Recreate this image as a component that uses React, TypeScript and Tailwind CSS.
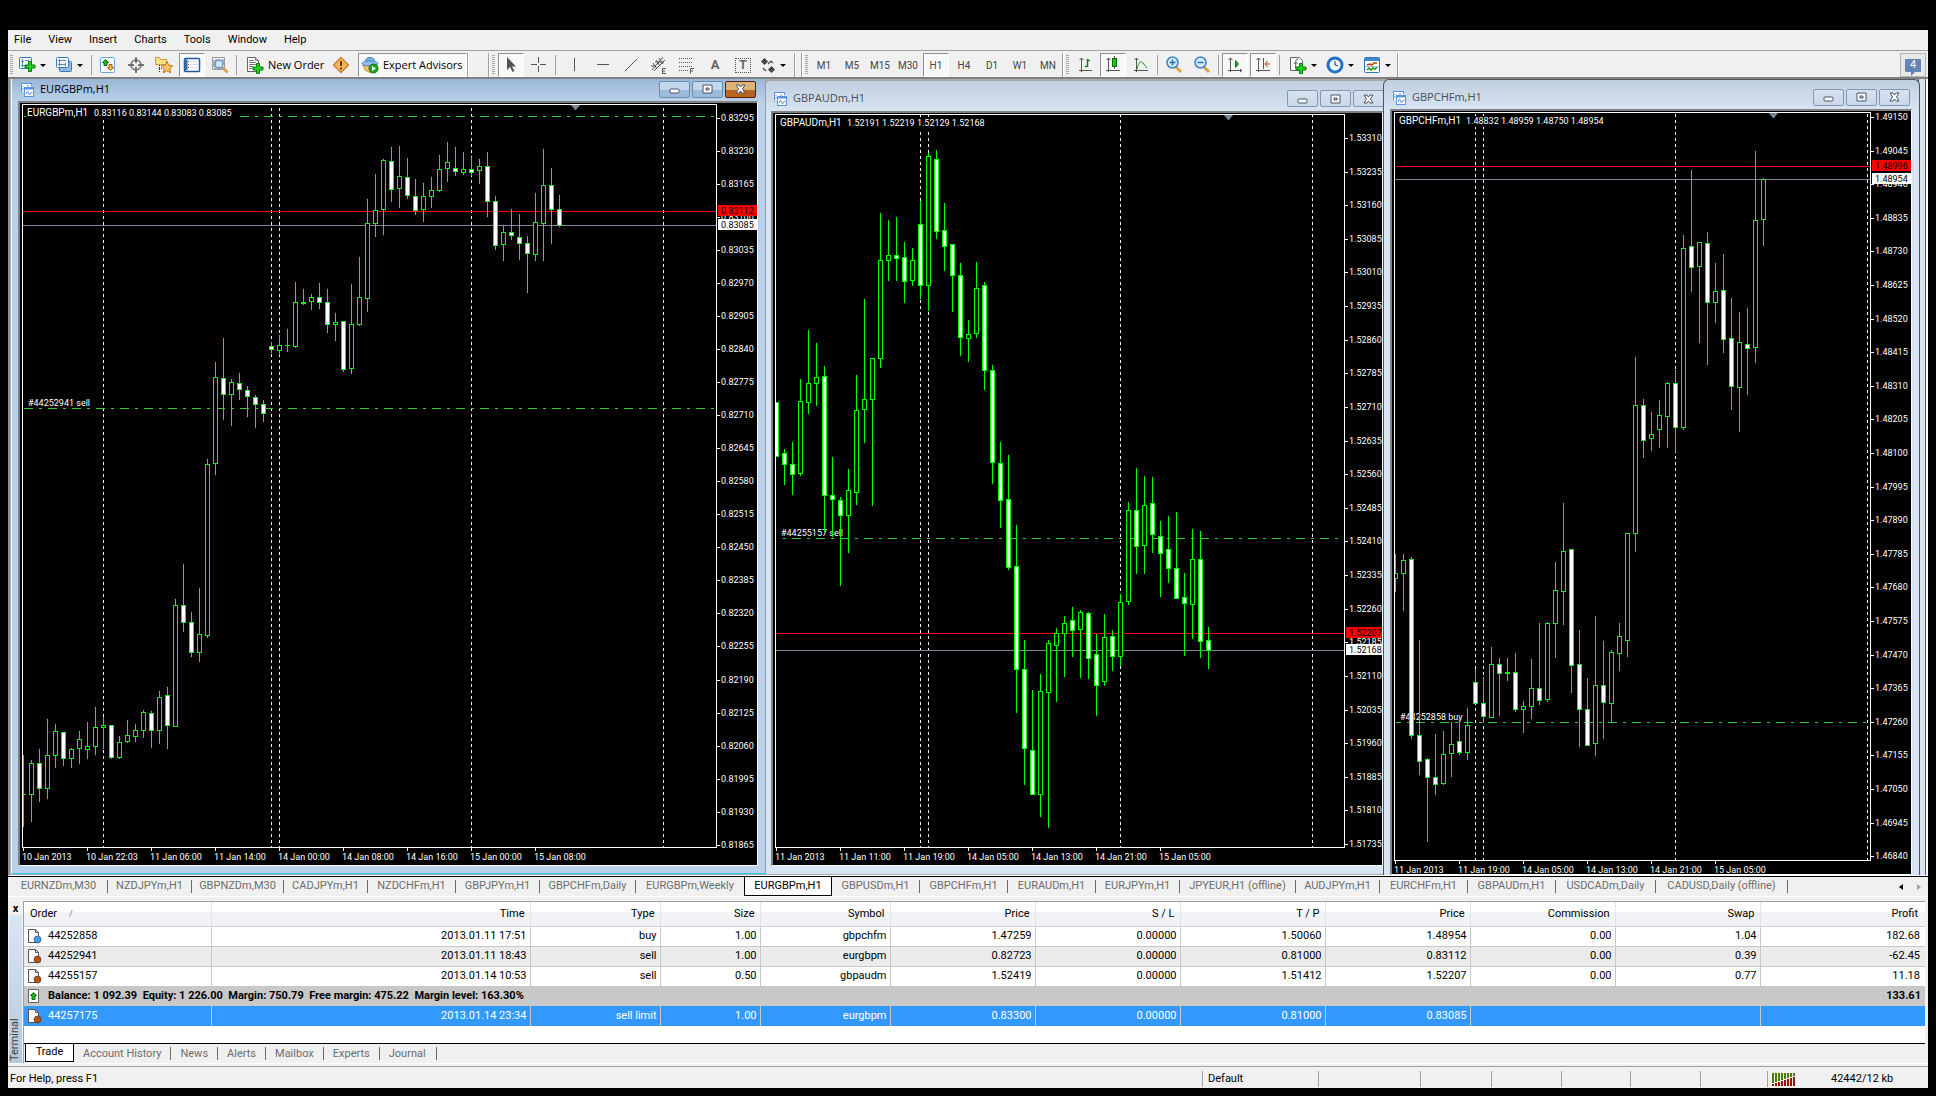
import React from 'react';
import clsx from 'clsx';

// high, body top, body bottom, low, filled (1 = bear candle)
type Candle = [number, number, number, number, number];

type ChartData = {
  id: string;
  symbol: string;
  quotes: string;
  order: string;
  orderY: number;
  limitY?: number;
  view: { x: number; y: number; w: number; h: number };
  plot: { left: number; top: number; right: number; bottom: number };
  firstX: number;
  days: number[];
  marker: number;
  ask: { y: number; label: string };
  bid: { y: number; label: string };
  axis: { y: number; step: number; from: number; by: number; count: number };
  times: string[];
  candles: Candle[];
};

const eurgbp: ChartData = {
  id: 'eurgbp',
  symbol: 'EURGBPm,H1',
  quotes: '0.83116 0.83144 0.83083 0.83085',
  order: '#44252941 sell',
  orderY: 408,
  limitY: 116,
  view: { x: 20, y: 103, w: 737, h: 762 },
  plot: { left: 22, top: 104, right: 716, bottom: 847 },
  firstX: 23,
  days: [103, 271, 279, 471, 663],
  marker: 575,
  ask: { y: 211, label: '0.83112' },
  bid: { y: 225, label: '0.83085' },
  axis: { y: 118, step: 33.03, from: 83295, by: 65, count: 23 },
  times: ['10 Jan 2013', '10 Jan 22:03', '11 Jan 06:00', '11 Jan 14:00', '14 Jan 00:00', '14 Jan 08:00', '14 Jan 16:00', '15 Jan 00:00', '15 Jan 08:00'],
  candles: [
    [755, 794, 795, 827, 0], [760, 763, 795, 822, 0], [749, 763, 789, 802, 1], [719, 755, 789, 799, 0],
    [724, 731, 756, 768, 0], [732, 732, 759, 766, 1], [748, 749, 759, 768, 0], [731, 739, 749, 764, 0],
    [722, 746, 750, 759, 0], [707, 727, 747, 755, 0], [717, 725, 728, 749, 0], [725, 725, 758, 759, 1],
    [736, 742, 758, 759, 0], [720, 735, 742, 743, 0], [724, 730, 737, 742, 0], [710, 712, 731, 738, 0],
    [711, 713, 731, 748, 1], [691, 697, 731, 744, 0], [687, 695, 726, 749, 1], [599, 605, 727, 727, 0],
    [564, 605, 623, 632, 1], [612, 622, 653, 657, 1], [588, 634, 653, 662, 0], [459, 464, 636, 638, 0],
    [362, 377, 464, 475, 0], [338, 378, 395, 420, 1], [379, 382, 395, 426, 0], [373, 383, 390, 400, 1],
    [386, 390, 397, 417, 1], [395, 397, 405, 428, 1], [400, 404, 414, 422, 1], [342, 346, 350, 353, 1],
    [335, 345, 351, 355, 0], [329, 345, 346, 352, 0], [282, 302, 347, 348, 0], [289, 302, 304, 305, 1],
    [294, 297, 302, 310, 0], [283, 297, 303, 309, 1], [289, 302, 325, 333, 1], [313, 322, 325, 341, 0],
    [321, 321, 370, 372, 1], [284, 324, 369, 374, 0], [257, 297, 325, 326, 0], [199, 223, 299, 312, 0],
    [174, 210, 224, 237, 0], [159, 160, 210, 235, 0], [147, 161, 190, 202, 1], [146, 176, 189, 208, 0],
    [158, 177, 196, 199, 1], [179, 196, 211, 215, 1], [183, 196, 210, 222, 0], [177, 190, 197, 208, 0],
    [155, 169, 191, 192, 0], [142, 162, 169, 182, 0], [147, 168, 172, 176, 1], [152, 169, 173, 175, 0],
    [157, 169, 173, 176, 1], [159, 166, 171, 184, 0], [152, 166, 202, 217, 1], [196, 201, 246, 250, 1],
    [225, 232, 245, 261, 0], [209, 232, 236, 240, 1], [214, 237, 244, 260, 1], [236, 243, 254, 293, 1],
    [193, 222, 255, 261, 0], [149, 185, 224, 261, 0], [168, 185, 210, 244, 1], [195, 209, 226, 227, 1],
  ],
};

const gbpaud: ChartData = {
  id: 'gbpaud',
  symbol: 'GBPAUDm,H1',
  quotes: '1.52191 1.52219 1.52129 1.52168',
  order: '#44255157 sell',
  orderY: 538,
  view: { x: 773, y: 113, w: 609, h: 752 },
  plot: { left: 775, top: 114, right: 1344, bottom: 847 },
  firstX: 776,
  days: [920, 928, 1120, 1312],
  marker: 1228,
  ask: { y: 633, label: '1.52207' },
  bid: { y: 650, label: '1.52168' },
  axis: { y: 138, step: 33.62, from: 153310, by: 75, count: 22 },
  times: ['11 Jan 2013', '11 Jan 11:00', '11 Jan 19:00', '14 Jan 05:00', '14 Jan 13:00', '14 Jan 21:00', '15 Jan 05:00'],
  candles: [
    [402, 402, 457, 457, 1], [449, 453, 465, 485, 1], [442, 464, 475, 495, 1], [379, 401, 474, 476, 0],
    [330, 383, 403, 414, 0], [343, 377, 384, 406, 0], [366, 376, 496, 532, 1], [457, 495, 500, 537, 1],
    [497, 500, 516, 586, 1], [469, 490, 516, 553, 0], [375, 410, 493, 505, 0], [299, 399, 410, 443, 0],
    [358, 358, 400, 506, 0], [213, 260, 359, 368, 0], [220, 255, 261, 281, 0], [217, 255, 259, 281, 1],
    [242, 257, 282, 303, 1], [248, 260, 281, 286, 0], [201, 224, 286, 299, 1], [153, 156, 286, 311, 0],
    [150, 159, 232, 239, 1], [203, 230, 247, 271, 1], [244, 244, 276, 312, 1], [263, 275, 338, 356, 1],
    [320, 334, 339, 362, 0], [262, 288, 334, 338, 0], [282, 285, 371, 390, 1], [365, 370, 463, 484, 1],
    [442, 463, 501, 528, 1], [455, 499, 568, 570, 1], [525, 566, 670, 713, 1], [640, 669, 749, 785, 1],
    [690, 750, 795, 795, 1], [674, 691, 795, 817, 0], [640, 643, 693, 828, 0], [628, 633, 646, 702, 0],
    [616, 623, 634, 677, 0], [607, 620, 631, 657, 1], [610, 612, 630, 678, 0], [612, 613, 659, 679, 1],
    [634, 654, 686, 716, 1], [614, 637, 682, 686, 0], [630, 636, 657, 671, 1], [594, 602, 657, 666, 0],
    [502, 510, 602, 605, 0], [468, 510, 547, 574, 1], [476, 505, 546, 574, 0], [477, 503, 535, 553, 1],
    [521, 536, 554, 597, 1], [516, 549, 569, 583, 1], [512, 568, 599, 599, 1], [573, 597, 604, 656, 1],
    [529, 559, 605, 639, 0], [531, 559, 642, 658, 1], [627, 640, 651, 669, 1],
  ],
};

const gbpchf: ChartData = {
  id: 'gbpchf',
  symbol: 'GBPCHFm,H1',
  quotes: '1.48832 1.48959 1.48750 1.48954',
  order: '#44252858 buy',
  orderY: 722,
  view: { x: 1392, y: 111, w: 519, h: 763 },
  plot: { left: 1394, top: 112, right: 1870, bottom: 860 },
  firstX: 1395,
  days: [1475, 1483, 1675, 1867],
  marker: 1773,
  ask: { y: 166, label: '1.48996' },
  bid: { y: 179, label: '1.48954' },
  axis: { y: 117, step: 33.6, from: 149150, by: 105, count: 23 },
  times: ['11 Jan 2013', '11 Jan 19:00', '14 Jan 05:00', '14 Jan 13:00', '14 Jan 21:00', '15 Jan 05:00'],
  candles: [
    [554, 573, 579, 592, 0], [554, 560, 574, 611, 0], [557, 559, 736, 739, 1], [640, 735, 762, 775, 1],
    [758, 759, 778, 842, 1], [734, 777, 785, 795, 1], [731, 754, 784, 785, 0], [722, 744, 754, 777, 0],
    [716, 741, 753, 755, 1], [708, 725, 753, 760, 0], [669, 682, 704, 704, 1], [677, 703, 717, 723, 1],
    [647, 664, 718, 718, 0], [658, 664, 674, 716, 1], [658, 672, 674, 681, 1], [653, 672, 710, 712, 1],
    [701, 706, 710, 733, 0], [659, 688, 707, 719, 0], [623, 688, 701, 705, 1], [622, 623, 700, 702, 0],
    [562, 590, 624, 658, 0], [503, 551, 592, 625, 0], [549, 549, 666, 693, 1], [630, 664, 710, 747, 1],
    [678, 709, 746, 746, 1], [616, 685, 744, 756, 0], [641, 685, 703, 739, 1], [650, 652, 704, 722, 0],
    [623, 636, 654, 671, 0], [533, 533, 641, 657, 0], [357, 405, 534, 552, 0], [399, 405, 441, 458, 1],
    [412, 434, 439, 451, 0], [400, 415, 430, 448, 0], [382, 383, 417, 448, 0], [370, 383, 428, 452, 1],
    [235, 248, 428, 430, 0], [170, 246, 268, 292, 1], [242, 242, 267, 343, 0], [232, 243, 303, 365, 1],
    [263, 291, 303, 323, 0], [254, 290, 340, 353, 1], [298, 338, 387, 410, 1], [312, 342, 388, 432, 0],
    [308, 344, 349, 395, 1], [151, 220, 348, 363, 0], [178, 179, 220, 246, 0],
  ],
};

const Chart = ({ data }: { data: ChartData }) => {
  const { view, plot, axis, ask, bid } = data;
  const plotW = plot.right - plot.left;
  const tagW = view.x + view.w - plot.right - 2;
  const orderLines = data.limitY ? [data.limitY, data.orderY] : [data.orderY];

  return (
    <svg
      width={view.w}
      height={view.h}
      viewBox={`${view.x} ${view.y} ${view.w} ${view.h}`}
      className="block shrink-0 bg-black font-['Roboto','Liberation_Sans',sans-serif] text-[9px]"
      role="img"
      aria-label={data.symbol}
    >
      <defs>
        <clipPath id={data.id}>
          <rect x={plot.left + 1} y={plot.top} width={plotW} height={plot.bottom - plot.top} />
        </clipPath>
        <pattern id={`${data.id}-v`} width="1" height="6" patternUnits="userSpaceOnUse">
          <rect width="1" height="3" fill="#fff" />
        </pattern>
        <pattern id={`${data.id}-h`} width="24" height="1" patternUnits="userSpaceOnUse">
          <rect width="9" height="1" fill="#32cd32" />
          <rect x="15" width="3" height="1" fill="#32cd32" />
        </pattern>
      </defs>

      <g shapeRendering="crispEdges">
        {data.days.map((x) => (
          <rect key={x} x={x} y={plot.top} width="1" height={plot.bottom - plot.top} fill={`url(#${data.id}-v)`} />
        ))}
        {orderLines.map((y) => (
          <rect key={y} x={plot.left + 2} y={y} width={plotW - 4} height="1" fill={`url(#${data.id}-h)`} />
        ))}
        <rect x={plot.left} y={ask.y} width={plotW} height="1" fill="#f00" />
        <rect x={plot.left} y={bid.y} width={plotW} height="1" fill="#778899" />
      </g>

      <text x={plot.left + 6} y={data.orderY - 2} fill="#fff">{data.order}</text>

      <g shapeRendering="crispEdges" clipPath={`url(#${data.id})`}>
        {data.candles.map(([high, top, bottom, low, filled], i) => {
          const x = data.firstX + i * 8;
          return (
            <g key={x}>
              <rect x={x} y={high} width="1" height={low - high} fill="#0f0" />
              <rect x={x - 2} y={top} width="5" height={bottom - top} fill="#0f0" />
              {bottom - top > 2 && (
                <rect x={x - 1} y={top + 1} width="3" height={bottom - top - 2} fill={filled ? '#fff' : '#000'} />
              )}
            </g>
          );
        })}
      </g>

      <rect x={plot.left + 4} y={plot.top + 4} width="213" height="11" fill="#000" />
      <text x={plot.left + 5} y={plot.top + 12} fill="#fff" className="text-[10px]">{data.symbol}</text>
      <text x={plot.left + 72} y={plot.top + 12} fill="#fff">{data.quotes}</text>

      <g shapeRendering="crispEdges" fill="#fff">
        <rect x={plot.left} y={plot.top} width={plotW + 1} height="1" />
        <rect x={plot.left} y={plot.bottom} width={plotW + 1} height="1" />
        <rect x={plot.left} y={plot.top} width="1" height={plot.bottom - plot.top} />
        <rect x={plot.right} y={plot.top} width="1" height={plot.bottom - plot.top} />
      </g>
      <path d={`M${data.marker - 4} ${plot.top + 1}h9l-4 5h-1z`} fill="#778899" />

      {Array.from({ length: axis.count }, (_, i) => {
        const y = Math.round(axis.y + i * axis.step);
        return (
          <g key={i} fill="#fff">
            <rect x={plot.right} y={y} width="4" height="1" />
            <text x={plot.right + 5} y={y + 3}>{((axis.from - i * axis.by) / 100000).toFixed(5)}</text>
          </g>
        );
      })}
      {data.times.map((time, i) => (
        <g key={time} fill="#fff">
          <rect x={data.firstX + i * 64} y={plot.bottom} width="1" height="4" />
          <text x={data.firstX - 1 + i * 64} y={plot.bottom + 13}>{time}</text>
        </g>
      ))}

      <rect x={plot.right + 2} y={ask.y - 6} width={tagW} height="11" fill="#f00" />
      <text x={plot.right + 5} y={ask.y + 3} fill="#000">{ask.label}</text>
      <rect x={plot.right + 2} y={bid.y - 6} width={tagW} height="11" fill="#fff" />
      <text x={plot.right + 5} y={bid.y + 3} fill="#000">{bid.label}</text>
    </svg>
  );
};

const ChartIcon = () => (
  <svg width="15" height="15" viewBox="0 0 15 15" fill="none" stroke="#5b93e0" aria-hidden="true">
    <path d="M1.500 10.500V1.500H11.500V4" fill="#fff" />
    <path d="M1 1.500H12M3 8V4M5 7V4M7 4h2" strokeDasharray="2 1" />
    <rect x="4.500" y="5.500" width="9" height="9" fill="#fff" />
    <path d="M4 6.500h10" strokeWidth="2" />
    <path d="M6 12l1.500-3 2 4 2-3 1 1" />
  </svg>
);

const CaptionButton = ({ kind, active }: { kind: 'Minimize' | 'Maximize' | 'Close'; active: boolean }) => (
  <button
    aria-label={kind}
    className={clsx(
      'flex h-[17px] w-[31px] items-center justify-center rounded-[2px] border',
      active && kind === 'Close' && 'border-[#5a1a14] bg-linear-to-b from-[#dcb478] from-50% to-[#b5651d] to-50%',
      active && kind !== 'Close' && 'border-[#6f8bab] bg-linear-to-b from-[#c2d7ee] from-50% to-[#9dbbdc] to-50%',
      !active && 'border-[#8797b3] bg-linear-to-b from-[#d6e2f0] to-[#cbd8e8]',
    )}
  >
    <svg width="11" height="10" viewBox="0 0 11 10" fill="#fff" stroke="#4a5468" aria-hidden="true">
      {kind === 'Minimize' && <rect x="1" y="5" width="9" height="4" rx="1" />}
      {kind === 'Maximize' && <path fillRule="evenodd" d="M1 1h9v8H1zM4 4v2h3V4z" />}
      {kind === 'Close' && <path d="M1 1h3l1.500 2L7 1h3L7.500 5 10 9H7L5.500 7 4 9H1l2.500-4z" />}
    </svg>
  </button>
);

type WindowProps = { data: ChartData; active?: boolean; className: string; titleClass: string };

const ChartWindow = ({ data, active = false, className, titleClass }: WindowProps) => (
  <section className={clsx('absolute overflow-hidden', className)}>
    <header className={clsx('flex items-center gap-[5px] pl-2', titleClass)}>
      <ChartIcon />
      <h2 className={clsx("flex-1 font-['Open_Sans'] text-[11px]", active ? 'text-black' : 'text-[#4a5058]')}>{data.symbol}</h2>
      <div className="flex gap-[2px]">
        <CaptionButton kind="Minimize" active={active} />
        <CaptionButton kind="Maximize" active={active} />
        <CaptionButton kind="Close" active={active} />
      </div>
    </header>
    <div className="ml-[6px] w-max border-t-2 border-r border-b border-l-2 border-t-[#808080] border-r-white border-b-white border-l-[#808080]">
      <Chart data={data} />
    </div>
  </section>
);

/* ---------- toolbar ---------- */

const Svg = ({ children, w = 18 }: { children: React.ReactNode; w?: number }) => (
  <svg width={w} height="18" viewBox={`0 0 ${w} 18`} fill="none" stroke="#555" className="shrink-0" aria-hidden="true">
    {children}
  </svg>
);

const icons = {
  newChart: (
    <Svg>
      <rect x="1.500" y="1.500" width="12" height="11" rx="1" fill="#f4f9ff" stroke="#3d78b8" />
      <path d="M4.500 3v8M3 9.500h9M3 5.500h3M7 4.500h4" stroke="#5b87b4" />
      <path d="M10.500 5.500h3v3.500H17v3h-3.500v3.500h-3V12H7V9h3.500z" fill="#1fd01f" stroke="#0a7a0a" />
    </Svg>
  ),
  profiles: (
    <Svg>
      <rect x="4.500" y="5.500" width="12" height="10" rx="1" fill="#8fb8e4" stroke="#3d78b8" />
      <rect x="1.500" y="1.500" width="12" height="10" rx="1" fill="#f4f9ff" stroke="#3d78b8" />
      <path d="M4.500 3v7M3 4.500h8M3 8.500h8M10.500 7v3" stroke="#5b87b4" />
    </Svg>
  ),
  market: (
    <Svg>
      <rect x="1.500" y="1.500" width="14" height="15" rx="1" fill="#fdfeff" stroke="#6ea3d6" />
      <path d="M6.500 3.500l3 3H8v3H5v-3H3.500z" fill="#22b822" stroke="#0c700c" />
      <path d="M11.500 14.500l-3-3H10v-3h3v3h1.500z" fill="#ffb640" stroke="#a65c08" />
    </Svg>
  ),
  data: (
    <Svg>
      <circle cx="9" cy="9" r="5" strokeWidth="1.500" stroke="#777" />
      <path d="M9 1v6M9 11v6M1 9h6M11 9h6" strokeWidth="1.500" />
    </Svg>
  ),
  navigator: (
    <Svg w={20}>
      <path d="M1.500 8.500v-7h4l1 2h6v5z" fill="#fbdf8a" stroke="#cf9a3a" />
      <path d="M5.500 9v7M5 12.500h4" strokeDasharray="1 1" stroke="#333" />
      <path d="M13 5.500l1.800 3.700 4 .6-2.900 2.900.7 4.100-3.600-2-3.600 2 .7-4.100-2.900-2.900 4-.6z" fill="#ffc069" stroke="#c4781c" />
    </Svg>
  ),
  terminal: (
    <Svg>
      <rect x="1.500" y="2.500" width="15" height="13" rx="1" fill="#fff" stroke="#1f5c9e" strokeWidth="1.500" />
      <path d="M3 3.500v11" stroke="#2f6fb0" strokeWidth="3" />
      <path d="M7 5.500h8M7 8.500h8M7 11.500h8" stroke="#d3ddf2" />
      <path d="M5.500 5v8" stroke="#b03030" strokeDasharray="1 2" />
    </Svg>
  ),
  tester: (
    <Svg>
      <path d="M1.500 1.500h12v12h-12z" fill="#f5f5f5" stroke="#999" />
      <path d="M3 4v7M5 3v8M12 3v5M3 12h9" stroke="#777" />
      <circle cx="8" cy="8" r="4" fill="#cfe6fa" stroke="#5c93cb" strokeWidth="1.500" />
      <path d="M11.500 11.500l5 5" stroke="#d79a4a" strokeWidth="2.500" />
    </Svg>
  ),
  order: (
    <Svg>
      <path d="M1.500 1.500h8l3 3v11h-11z" fill="#fff" stroke="#666" />
      <path d="M9.500 1.500v3h3M3 4.500h5M3 6.500h7M3 8.500h7M3 10.500h4M3 12.500h3" stroke="#777" />
      <path d="M10.500 7.500h3V11H17v3h-3.500v3.500h-3V14H7v-3h3.500z" fill="#1fd01f" stroke="#0a7a0a" />
    </Svg>
  ),
  warning: (
    <Svg>
      <path d="M9 1.500L16.500 9 9 16.500 1.500 9z" fill="#f6b45c" stroke="#c8842c" strokeLinejoin="round" strokeWidth="1.500" />
      <path d="M9 5v5M9 11.500v2" stroke="#6b3c08" strokeWidth="2" />
    </Svg>
  ),
  expert: (
    <Svg>
      <path d="M2 9h14l-2 5-4 3-6-3z" fill="#f2c46c" stroke="#c99236" />
      <path d="M4.500 7C4 3 6 1.500 9 1.500S14 3 13.500 7z" fill="#75b0e6" stroke="#4a86c4" />
      <ellipse cx="9" cy="7.500" rx="8" ry="2.500" fill="#8fc0ee" stroke="#4a86c4" />
      <circle cx="12.500" cy="12.500" r="4.500" fill="#17a81d" stroke="#0c7a10" />
      <path d="M11 10v5l4-2.500z" fill="#fff" stroke="none" />
    </Svg>
  ),
  cursor: <Svg><path d="M5 1v13l3-3 2.500 5 2-1-2.500-4.500h4z" fill="#555" stroke="none" /></Svg>,
  cross: <Svg><path d="M8.500 1v6M8.500 10v6M1 8.500h6M10 8.500h6" stroke="#555" /></Svg>,
  vline: <Svg><path d="M8.500 2v13" /></Svg>,
  hline: <Svg><path d="M3 8.500h12" /></Svg>,
  trend: <Svg><path d="M3 15L15 3" /></Svg>,
  channel: (
    <Svg>
      <path d="M2 14L13 1M4 15L15 4M3 7l4 6M6 4l4 6M9 2l4 6M1 10h5M5 6h9" />
      <path d="M16 12.500h-3.500v5H16M12.500 15H15" />
    </Svg>
  ),
  fibo: (
    <Svg>
      <path d="M1 2.500h14M1 6.500h14M1 10.500h14M1 14.500h9" strokeDasharray="1 1" />
      <path d="M16 12.500h-3.500v5M12.500 15H15" />
    </Svg>
  ),
  shapes: (
    <Svg w={16}>
      <path d="M4.500 2l3.500 3.500L4.500 9 1 5.500zM11.500 10l3.500 3.500-3.500 3.500L8 13.500z" fill="#444" stroke="none" />
      <path d="M3 12l3 3M8 8l3-3M11 5l2 2" strokeWidth="1.500" />
    </Svg>
  ),
  bars: (
    <Svg>
      <path d="M5.500 2v14M3 14.500h13M3.500 4l2-2 2 2" />
      <path d="M11.500 3v8M9 10.500h2M12 4.500h2" stroke="#1a7a1a" strokeWidth="1.500" />
    </Svg>
  ),
  candles: (
    <Svg>
      <path d="M4.500 2v14M2 14.500h14M2.500 4l2-2 2 2M10.500 0v13" />
      <rect x="8.500" y="2.500" width="4" height="8" fill="#1fc01f" stroke="#0c700c" />
    </Svg>
  ),
  line: (
    <Svg>
      <path d="M4.500 2v14M2 14.500h14M2.500 4l2-2 2 2" />
      <path d="M5 13C7 5 9 5 11 7l4 5" stroke="#1a9a1a" />
    </Svg>
  ),
  zoomIn: (
    <Svg>
      <path d="M11 11l5 5" stroke="#d9a33a" strokeWidth="3" />
      <circle cx="7.500" cy="6.500" r="5.500" fill="#d4eafc" stroke="#3f83c6" strokeWidth="1.500" />
      <path d="M4.500 6.500h6M7.500 3.500v6" stroke="#2b6cb3" strokeWidth="1.500" />
    </Svg>
  ),
  zoomOut: (
    <Svg>
      <path d="M11 11l5 5" stroke="#d9a33a" strokeWidth="3" />
      <circle cx="7.500" cy="6.500" r="5.500" fill="#d4eafc" stroke="#3f83c6" strokeWidth="1.500" />
      <path d="M4.500 6.500h6" stroke="#2b6cb3" strokeWidth="1.500" />
    </Svg>
  ),
  scroll: (
    <Svg>
      <path d="M4.500 2v14M2 14.500h14M2.500 4l2-2 2 2M14 13l2 1.500-2 1.500" />
      <path d="M9.500 4.500v7l3-3.500z" fill="#1fb01f" stroke="#0c800c" />
    </Svg>
  ),
  shift: (
    <Svg>
      <path d="M4.500 2v14M2 14.500h14M2.500 4l2-2 2 2" />
      <path d="M9.500 2v11" stroke="#2b5f9a" />
      <path d="M16 8h-5M13.500 5L11 8l2.500 3" stroke="#a8430c" />
    </Svg>
  ),
  indicators: (
    <Svg>
      <path d="M1.500 1.500h9l3 3v10h-12z" fill="#fff" stroke="#666" />
      <path d="M9 3C6 3 7 6 6.500 12M4.500 7h4" />
      <path d="M10.500 7.500h3V11H17v3h-3.500v3.500h-3V14H7v-3h3.500z" fill="#1fd01f" stroke="#0a7a0a" />
    </Svg>
  ),
  clock: (
    <Svg>
      <circle cx="9" cy="9" r="7" fill="#eef6ff" stroke="#2272c3" strokeWidth="3" />
      <path d="M9 5v4l3 1" stroke="#333" />
    </Svg>
  ),
  template: (
    <Svg>
      <rect x="1.500" y="1.500" width="15" height="15" rx="1" fill="#fff" stroke="#2f74b8" />
      <path d="M2 3.500h14" stroke="#3f86cc" strokeWidth="3" />
      <path d="M4 9l3-1 2 1 2-2 3 0" stroke="#a8430c" strokeWidth="1.500" />
      <path d="M4 14l2-2 2 2 2-2 2 1 2-2" stroke="#1a9a1a" strokeWidth="1.500" />
      <path d="M2 10.500h14" stroke="#9cc" />
    </Svg>
  ),
};

const pressedStyle = 'border border-t-[#909090] border-l-[#909090] border-r-white border-b-white bg-[#f8f8f8]';

type ToolProps = { label: string; pressed?: boolean; children: React.ReactNode };

const Tool = ({ label, pressed, children }: ToolProps) => (
  <button
    aria-label={label}
    title={label}
    aria-pressed={pressed}
    className={clsx('mx-px flex h-6 w-[26px] shrink-0 items-center justify-center text-[10px] text-[#444]', pressed && pressedStyle)}
  >
    {children}
  </button>
);

const DropTool = ({ label, children }: ToolProps) => (
  <button aria-label={label} title={label} className="flex h-6 w-[37px] shrink-0 items-center gap-1 pl-[3px]">
    {children}
    <span className="h-0 w-0 border-x-[3px] border-t-[3px] border-x-transparent border-t-black" />
  </button>
);

const Grip = () => (
  <span className="mx-[2px] h-5 w-[3px] shrink-0 bg-[repeating-linear-gradient(to_bottom,#a8a8a8_0_1px,#f0f0f0_1px_2px)]" />
);
const Edge = () => <span className="h-[24px] w-[2px] shrink-0 border-l border-[#a0a0a0] bg-white" />;
const Sep = () => <span className="mx-[2px] h-5 w-px shrink-0 bg-[#a0a0a0]" />;

const periods = ['M1', 'M5', 'M15', 'M30', 'H1', 'H4', 'D1', 'W1', 'MN'];

const Toolbar = () => (
  <div className="flex h-[26px] items-center pt-[2px]">
    <Grip />
    <div className="flex items-center">
      <DropTool label="New chart">{icons.newChart}</DropTool>
      <DropTool label="Profiles">{icons.profiles}</DropTool>
      <Sep />
      <Tool label="Market Watch">{icons.market}</Tool>
      <Tool label="Data Window">{icons.data}</Tool>
      <Tool label="Navigator">{icons.navigator}</Tool>
      <Tool label="Terminal" pressed>{icons.terminal}</Tool>
      <Tool label="Strategy Tester">{icons.tester}</Tool>
      <Sep />
      <button className="flex h-6 w-[88px] shrink-0 items-center gap-1 pl-[7px] font-['Open_Sans'] text-[11px] whitespace-nowrap">
        {icons.order}
        New Order
      </button>
      <Tool label="MetaEditor">{icons.warning}</Tool>
      <button aria-pressed="true" className={clsx("ml-[3px] flex h-6 w-[109px] shrink-0 items-center gap-1 pl-[2px] font-['Open_Sans'] text-[11px] whitespace-nowrap", pressedStyle)}>
        {icons.expert}
        Expert Advisors
      </button>
      <Edge />
    </div>
    <div className="ml-[19px] flex items-center">
      <Edge />
      <Grip />
      <Tool label="Cursor" pressed>{icons.cursor}</Tool>
      <Tool label="Crosshair">{icons.cross}</Tool>
      <Sep />
      <div className="ml-[3px] flex items-center">
        <Tool label="Vertical line">{icons.vline}</Tool>
        <Tool label="Horizontal line">{icons.hline}</Tool>
        <Tool label="Trendline">{icons.trend}</Tool>
        <Tool label="Equidistant channel">{icons.channel}</Tool>
        <Tool label="Fibonacci">{icons.fibo}</Tool>
        <Tool label="Text"><span className="text-[13px] font-bold text-[#666]">A</span></Tool>
        <Tool label="Text label">
          <span className="border border-dotted border-[#555] px-[3px] text-[12px] leading-[13px] font-bold text-[#666]">T</span>
        </Tool>
        <DropTool label="Arrows">{icons.shapes}</DropTool>
      </div>
      <Edge />
    </div>
    <div className="ml-[5px] flex items-center">
      <Edge />
      <Grip />
      {periods.map((period) => (
        <Tool key={period} label={period} pressed={period === 'H1'}>{period}</Tool>
      ))}
      <Edge />
      <Grip />
      <Tool label="Bar chart">{icons.bars}</Tool>
      <Tool label="Candlesticks" pressed>{icons.candles}</Tool>
      <Tool label="Line chart">{icons.line}</Tool>
      <Sep />
      <Tool label="Zoom in">{icons.zoomIn}</Tool>
      <Tool label="Zoom out">{icons.zoomOut}</Tool>
      <Sep />
      <Tool label="Auto scroll" pressed>{icons.scroll}</Tool>
      <Tool label="Chart shift" pressed>{icons.shift}</Tool>
      <Sep />
      <div className="ml-1 flex items-center">
        <DropTool label="Indicators">{icons.indicators}</DropTool>
        <DropTool label="Periods">{icons.clock}</DropTool>
        <DropTool label="Templates">{icons.template}</DropTool>
      </div>
      <Edge />
    </div>
    <button aria-label="4 new messages" className="mr-[2px] ml-auto flex h-6 w-[26px] items-center justify-center border border-[#b4b4b4] bg-[#e8e8e8]">
      <span className="relative flex h-[13px] w-4 items-center justify-center rounded-[1px] bg-[#6583b5] text-[11px] text-white">
        4
        <span className="absolute top-full left-[6px] h-0 w-0 border-t-4 border-r-4 border-t-[#6583b5] border-r-transparent" />
      </span>
    </button>
  </div>
);

/* ---------- bottom part ---------- */

const chartTabs = [
  { name: 'EURNZDm,M30', width: 'w-[98px]' },
  { name: 'NZDJPYm,H1', width: 'w-[84px]' },
  { name: 'GBPNZDm,M30', width: 'w-[92px]' },
  { name: 'CADJPYm,H1', width: 'w-[84px]' },
  { name: 'NZDCHFm,H1', width: 'w-[88px]' },
  { name: 'GBPJPYm,H1', width: 'w-[84px]' },
  { name: 'GBPCHFm,Daily', width: 'w-[96px]' },
  { name: 'EURGBPm,Weekly', width: 'w-[108px]' },
  { name: 'EURGBPm,H1', width: 'w-[88px]' },
  { name: 'GBPUSDm,H1', width: 'w-[88px]' },
  { name: 'GBPCHFm,H1', width: 'w-[88px]' },
  { name: 'EURAUDm,H1', width: 'w-[88px]' },
  { name: 'EURJPYm,H1', width: 'w-[84px]' },
  { name: 'JPYEUR,H1 (offline)', width: 'w-[116px]' },
  { name: 'AUDJPYm,H1', width: 'w-[84px]' },
  { name: 'EURCHFm,H1', width: 'w-[88px]' },
  { name: 'GBPAUDm,H1', width: 'w-[88px]' },
  { name: 'USDCADm,Daily', width: 'w-[100px]' },
  { name: 'CADUSD,Daily (offline)', width: 'w-[132px]' },
];

const ChartTabs = () => (
  <nav className="flex h-[20px] items-center border-b border-white pl-[2px] text-[11px] text-[#6d6d6d]">
    {chartTabs.map(({ name, width }) =>
      name === 'EURGBPm,H1' ? (
        <button key={name} className={clsx('h-[19px] shrink-0 self-start border border-t-0 border-black bg-white text-black', width)}>
          {name}
        </button>
      ) : (
        <button key={name} className={clsx('flex h-[13px] shrink-0 items-center justify-center whitespace-nowrap', width, name !== 'EURGBPm,Weekly' && 'border-r border-[#6d6d6d]')}>
          {name}
        </button>
      ),
    )}
    <div className="mr-[7px] ml-auto flex items-center gap-[14px]">
      <button aria-label="Scroll tabs left" className="h-0 w-0 border-y-[3px] border-r-4 border-y-transparent border-r-black" />
      <button aria-label="Scroll tabs right" className="h-0 w-0 border-y-[3px] border-l-4 border-y-transparent border-l-[#a0a0a0]" />
    </div>
  </nav>
);

const columns = ['Order', 'Time', 'Type', 'Size', 'Symbol', 'Price', 'S / L', 'T / P', 'Price', 'Commission', 'Swap', 'Profit'];
const columnWidths = [
  'w-[187px]', 'w-[319px]', 'w-[130px]', 'w-[100px]', 'w-[130px]', 'w-[145px]',
  'w-[145px]', 'w-[145px]', 'w-[145px]', 'w-[145px]', 'w-[145px]', '',
];

const trades = [
  ['44252858', '2013.01.11 17:51', 'buy', '1.00', 'gbpchfm', '1.47259', '0.00000', '1.50060', '1.48954', '0.00', '1.04', '182.68'],
  ['44252941', '2013.01.11 18:43', 'sell', '1.00', 'eurgbpm', '0.82723', '0.00000', '0.81000', '0.83112', '0.00', '0.39', '-62.45'],
  ['44255157', '2013.01.14 10:53', 'sell', '0.50', 'gbpaudm', '1.52419', '0.00000', '1.51412', '1.52207', '0.00', '0.77', '11.18'],
];
const pending = ['44257175', '2013.01.14 23:34', 'sell limit', '1.00', 'eurgbpm', '0.83300', '0.00000', '0.81000', '0.83085', '', '', ''];

const OrderIcon = ({ color }: { color: string }) => (
  <svg width="15" height="16" viewBox="0 0 15 16" fill="#fff" stroke="#555" className="shrink-0" aria-hidden="true">
    <path d="M1.500 1.500h7l3 3v10h-10z" />
    <path d="M8.500 1.500v3h3" fill="none" />
    <circle cx="10.500" cy="11.500" r="3.500" fill={color} stroke="#333" strokeWidth=".6" />
  </svg>
);

const OrderRow = ({ cells, rowClass, color }: { cells: string[]; rowClass: string; color: string }) => (
  <tr className={clsx('h-5', rowClass)}>
    {cells.map((cell, i) =>
      i === 0 ? (
        <td key={i} className="border-r border-[#c8c8c8] p-0">
          <span className="flex items-center gap-[6px] pl-[3px]">
            <OrderIcon color={color} />
            {cell}
          </span>
        </td>
      ) : (
        <td
          key={i}
          className={clsx('border-[#c8c8c8] py-0 pl-0 text-right', i < 11 && !(cell === '' && i === 9) && 'border-r', i === 11 ? 'pr-[5px]' : 'pr-[3px]')}
        >
          {cell}
        </td>
      ),
    )}
  </tr>
);

const terminalTabs = ['Account History', 'News', 'Alerts', 'Mailbox', 'Experts', 'Journal'];

const Terminal = () => (
  <div className="mt-1 flex border-b border-white">
    <div className="flex w-[15px] shrink-0 flex-col items-center">
      <button aria-label="Close terminal" className="h-[14px] text-[11px] leading-[11px] font-bold">x</button>
      <div className="flex w-[13px] flex-1 rotate-180 items-center justify-start bg-linear-to-t from-[#d9e6f4] to-[#b7c9dc] text-[11px] text-[#444] [writing-mode:vertical-rl]">
        <span className="mt-[2px]">Terminal</span>
      </div>
    </div>
    <div className="mr-[3px] min-w-0 flex-1 border-t border-l border-[#a0a0a0] bg-white">
      <table className="w-full table-fixed border-collapse text-[11px] leading-[16px]">
        <thead>
          <tr className="h-6 bg-linear-to-b from-white from-40% to-[#f0f2f5] to-45%">
            {columns.map((name, i) => (
              <th
                key={i}
                className={clsx(
                  'border-b border-b-[#d0d0d0] py-0 font-normal',
                  columnWidths[i],
                  i === 0 ? 'pr-0 pl-[6px] text-left' : 'pl-0 text-right',
                  i > 0 && i < 11 && 'pr-[5px]',
                  i < 11 ? 'border-r border-r-[#e2e4e8]' : 'pr-[7px]',
                )}
              >
                {name}
                {i === 0 && <span className="ml-3 text-[9px] text-[#777]">/</span>}
              </th>
            ))}
          </tr>
        </thead>
        <tbody>
          {trades.map((cells, i) => (
            <OrderRow
              key={cells[0]}
              cells={cells}
              color={cells[2] === 'buy' ? '#3d9bf5' : '#b8500f'}
              rowClass={clsx('border-t border-[#c8c8c8]', i % 2 === 1 && 'bg-[#ebebeb]')}
            />
          ))}
          <tr className="h-5 bg-[#c8c8c8] font-bold">
            <td colSpan={11} className="p-0">
              <span className="flex items-center gap-[6px] pl-[3px] whitespace-pre">
                <svg width="15" height="16" viewBox="0 0 15 16" fill="#fff" stroke="#666" aria-hidden="true">
                  <rect x="1.500" y="1.500" width="10" height="13" />
                  <path d="M6.500 4.500l3 3H8v4H5v-4H3.500z" fill="#22b822" stroke="#0c700c" />
                </svg>
                {'Balance: 1 092.39  Equity: 1 226.00  Margin: 750.79  Free margin: 475.22  Margin level: 163.30%'}
              </span>
            </td>
            <td className="py-0 pr-[4px] pl-0 text-right">133.61</td>
          </tr>
          <OrderRow cells={pending} color="#b8500f" rowClass="bg-[#3399ff] text-white" />
        </tbody>
      </table>
      <nav className="mt-[17px] flex h-5 items-center border-t border-black bg-[#f0f0f0] pl-px text-[11px] text-[#6d6d6d]">
        <button className="h-[18px] w-[49px] self-start border border-t-0 border-black bg-white text-black">Trade</button>
        {terminalTabs.map((name) => (
          <button key={name} className="h-[13px] border-r border-[#6d6d6d] px-[9px] leading-[13px] last:pr-[10px]">{name}</button>
        ))}
      </nav>
    </div>
  </div>
);

const StatusBar = () => (
  <footer className="mt-[2px] flex h-[22px] items-center border-t border-[#a0a0a0] pt-[3px] pl-[2px] text-[11px]">
    <span className="flex-1">For Help, press F1</span>
    <span className="h-4 w-[116px] border-l border-[#a0a0a0] pl-[5px] leading-[16px]">Default</span>
    <span className="h-4 w-[102px] border-l border-[#a0a0a0]" />
    <span className="h-4 w-[71px] border-l border-[#a0a0a0]" />
    <span className="h-4 w-[70px] border-l border-[#a0a0a0]" />
    <span className="h-4 w-[69px] border-l border-[#a0a0a0]" />
    <span className="h-4 w-[70px] border-l border-[#a0a0a0]" />
    <span className="h-4 w-[67px] border-l border-[#a0a0a0]" />
    <span className="flex h-4 w-[161px] items-center border-l border-[#a0a0a0] pl-1">
      <svg width="24" height="13" viewBox="0 0 24 13" aria-hidden="true">
        {Array.from({ length: 8 }, (_, i) => (
          <g key={i}>
            <rect x={i * 3} y="0" width="2" height={10 - i} fill="#4f7a00" />
            <rect x={i * 3} y={11 - i} width="2" height={2 + i} fill="#9a1500" />
          </g>
        ))}
      </svg>
      <span className="ml-[35px]">42442/12 kb</span>
    </span>
  </footer>
);

const menu = ['File', 'View', 'Insert', 'Charts', 'Tools', 'Window', 'Help'];

export default function App() {
  return (
    <div className="min-h-screen bg-black px-2 pt-[30px] pb-2 font-['Roboto','Liberation_Sans',sans-serif] text-black">
      <div className="bg-[#f0f0f0]">
        <nav className="flex h-[21px] items-center gap-[17px] border-b border-[#a0a0a0] pt-px pl-[6px] text-[11px]">
          {menu.map((item) => (
            <button key={item}>{item}</button>
          ))}
        </nav>
        <div className="border-b-2 border-[#808080]">
          <Toolbar />
        </div>

        <main className="relative h-[797px] overflow-hidden border-r-2 border-b border-l-2 border-r-white border-b-white border-l-[#909090] bg-[#ababab]">
          <ChartWindow
            data={gbpaud}
            className="top-[2px] left-[755px] h-[793px] w-[623px] rounded-t-md bg-linear-to-b from-[#c0cfde] to-[#d7e4f2] to-[30px]"
            titleClass="h-[30px] pt-[5px] pr-[4px]"
          />
          <ChartWindow
            data={eurgbp}
            active
            className="top-0 left-px h-[795px] w-[755px] border-r border-b border-l border-r-[#30c5e8] border-b-[#30c5e8] border-l-white bg-linear-to-b from-[#9ab6d6] to-[#b9d1ea] to-[22px]"
            titleClass="h-[22px] pr-[9px] pb-[2px]"
          />
          <div className="absolute top-0 right-0 h-full w-[8px] border-x border-[#50555c] bg-[#d7e4f2]" />
          <ChartWindow
            data={gbpchf}
            className="top-0 left-[1373px] h-[796px] w-[537px] rounded-t-md border-x border-t border-[#50555c] bg-linear-to-b from-[#c0cfde] to-[#d7e4f2] to-[30px]"
            titleClass="h-[29px] pt-[5px] pr-[9px]"
          />
        </main>

        <div className="border-t border-black">
          <ChartTabs />
        </div>
        <Terminal />
        <StatusBar />
      </div>
    </div>
  );
}
